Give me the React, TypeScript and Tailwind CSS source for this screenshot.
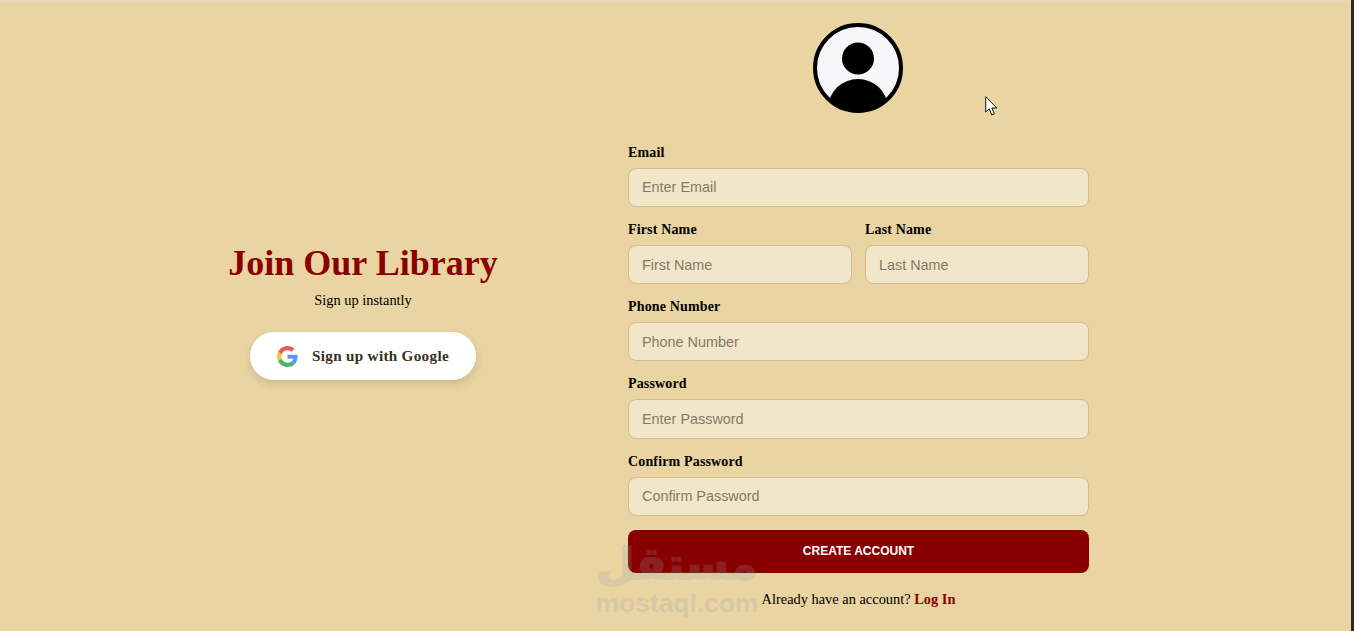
const inputClass =
  "w-full h-[39.25px] rounded-lg border border-[#d8b896] bg-[#f2e6c8] px-[13px] text-[14.4px] text-black outline-none placeholder:text-[#82796c] [font-family:'Liberation_Sans',Arial,sans-serif]";

function Field({ label, placeholder, className }: { label: string; placeholder: string; className?: string }) {
  return (
    <div className={className}>
      <label className="mb-[7px] block text-[14px] leading-[16px] font-bold tracking-[0.15px] text-black">{label}</label>
      <input type="text" placeholder={placeholder} className={inputClass} />
    </div>
  );
}

function GoogleIcon() {
  return (
    <svg width="21" height="21" viewBox="0 0 48 48" className="opacity-85">
      <path fill="#EA4335" d="M24 9.5c3.54 0 6.71 1.22 9.21 3.6l6.85-6.85C35.9 2.38 30.47 0 24 0 14.62 0 6.51 5.38 2.56 13.22l7.98 6.19C12.43 13.72 17.74 9.5 24 9.5z" />
      <path fill="#4285F4" d="M46.98 24.55c0-1.57-.15-3.09-.38-4.55H24v9.02h12.94c-.58 2.96-2.26 5.48-4.78 7.18l7.73 6c4.51-4.18 7.09-10.36 7.09-17.65z" />
      <path fill="#FBBC05" d="M10.53 28.59c-.48-1.45-.76-2.99-.76-4.59s.27-3.14.76-4.59l-7.98-6.19C.92 16.46 0 20.12 0 24c0 3.88.92 7.54 2.56 10.78l7.97-6.19z" />
      <path fill="#34A853" d="M24 48c6.48 0 11.93-2.13 15.89-5.81l-7.73-6c-2.15 1.45-4.92 2.3-8.16 2.3-6.26 0-11.57-4.22-13.47-9.91l-7.98 6.19C6.51 42.62 14.62 48 24 48z" />
    </svg>
  );
}

function Avatar() {
  return (
    <svg width="90" height="90" viewBox="0 0 90 90" className="block">
      <defs>
        <clipPath id="avatarClip">
          <circle cx="45" cy="45" r="42" />
        </clipPath>
      </defs>
      <circle cx="45" cy="45" r="43" fill="#f6f7f8" stroke="#000" strokeWidth="4" />
      <circle cx="45" cy="35.5" r="16" fill="#000" />
      <g clipPath="url(#avatarClip)">
        <ellipse cx="45" cy="84" rx="29.5" ry="28" fill="#000" />
      </g>
    </svg>
  );
}

function Cursor() {
  return (
    <svg width="14" height="21" viewBox="0 0 14 21" className="absolute left-[985px] top-[96px]">
      <path d="M0.7 0.7 L0.7 16 L4.2 12.8 L6.8 19 L9.4 17.9 L6.9 12 L11.8 12 Z" fill="#fff" stroke="#111" strokeWidth="1" strokeLinejoin="round" />
    </svg>
  );
}

export default function App() {
  return (
    <div className="relative h-[631px] w-full overflow-hidden bg-[#e9d4a2] [font-family:'Liberation_Serif','Times_New_Roman',serif]">
      <div className="h-[2px] bg-[#e3d8bd]" />
      <div className="absolute inset-y-0 right-0 w-[3px] bg-[#2f2a22]" />

      <div className="flex pl-[98px]">
        <div className="flex h-[629px] w-[530px] flex-col items-center justify-center pb-[11px] text-center">
          <h1 className="text-[36px] leading-[41px] font-bold text-[#8b0000]">Join Our Library</h1>
          <p className="mt-[8px] text-[14.4px] leading-[17px] text-black">Sign up instantly</p>
          <button className="mt-[23px] flex h-[48px] w-[226px] items-center justify-center gap-[14px] rounded-full bg-white pt-px text-[15.2px] font-bold tracking-[0.3px] text-[#3b2f20] shadow-[0_4px_10px_rgba(0,0,0,0.12)]">
            <GoogleIcon />
            Sign up with Google
          </button>
        </div>

        <div className="w-[461px]">
          <div className="flex justify-center pt-[21px] pr-px">
            <Avatar />
          </div>
          <form className="mt-[31.7px] flex flex-col gap-[15px]">
            <Field label="Email" placeholder="Enter Email" />
            <div className="flex gap-[13px]">
              <Field label="First Name" placeholder="First Name" className="flex-1" />
              <Field label="Last Name" placeholder="Last Name" className="flex-1" />
            </div>
            <Field label="Phone Number" placeholder="Phone Number" />
            <Field label="Password" placeholder="Enter Password" />
            <Field label="Confirm Password" placeholder="Confirm Password" />
            <button type="button" className="-mt-px h-[43px] rounded-lg bg-[#880000] pb-px text-[12px] font-bold text-white [font-family:'Liberation_Sans',Arial,sans-serif]">
              CREATE ACCOUNT
            </button>
          </form>
          <p className="mt-[18px] text-center text-[14.4px] leading-[17px] text-black">
            Already have an account? <span className="font-bold text-[#8b0000]">Log In</span>
          </p>
        </div>
      </div>

      <div className="pointer-events-none absolute left-[595px] top-[537px] flex w-[164px] flex-col items-center text-[#8f9fa8] opacity-20">
        <span dir="rtl" lang="ar" className="text-[44px] leading-[53px] font-bold [-webkit-text-stroke:1.5px_currentColor] [font-family:'DejaVu_Sans',sans-serif]">مستقل</span>
        <span className="text-[26.4px] leading-[26px] font-bold [font-family:'Liberation_Sans',Arial,sans-serif]">mostaql.com</span>
      </div>

      <Cursor />
    </div>
  );
}
